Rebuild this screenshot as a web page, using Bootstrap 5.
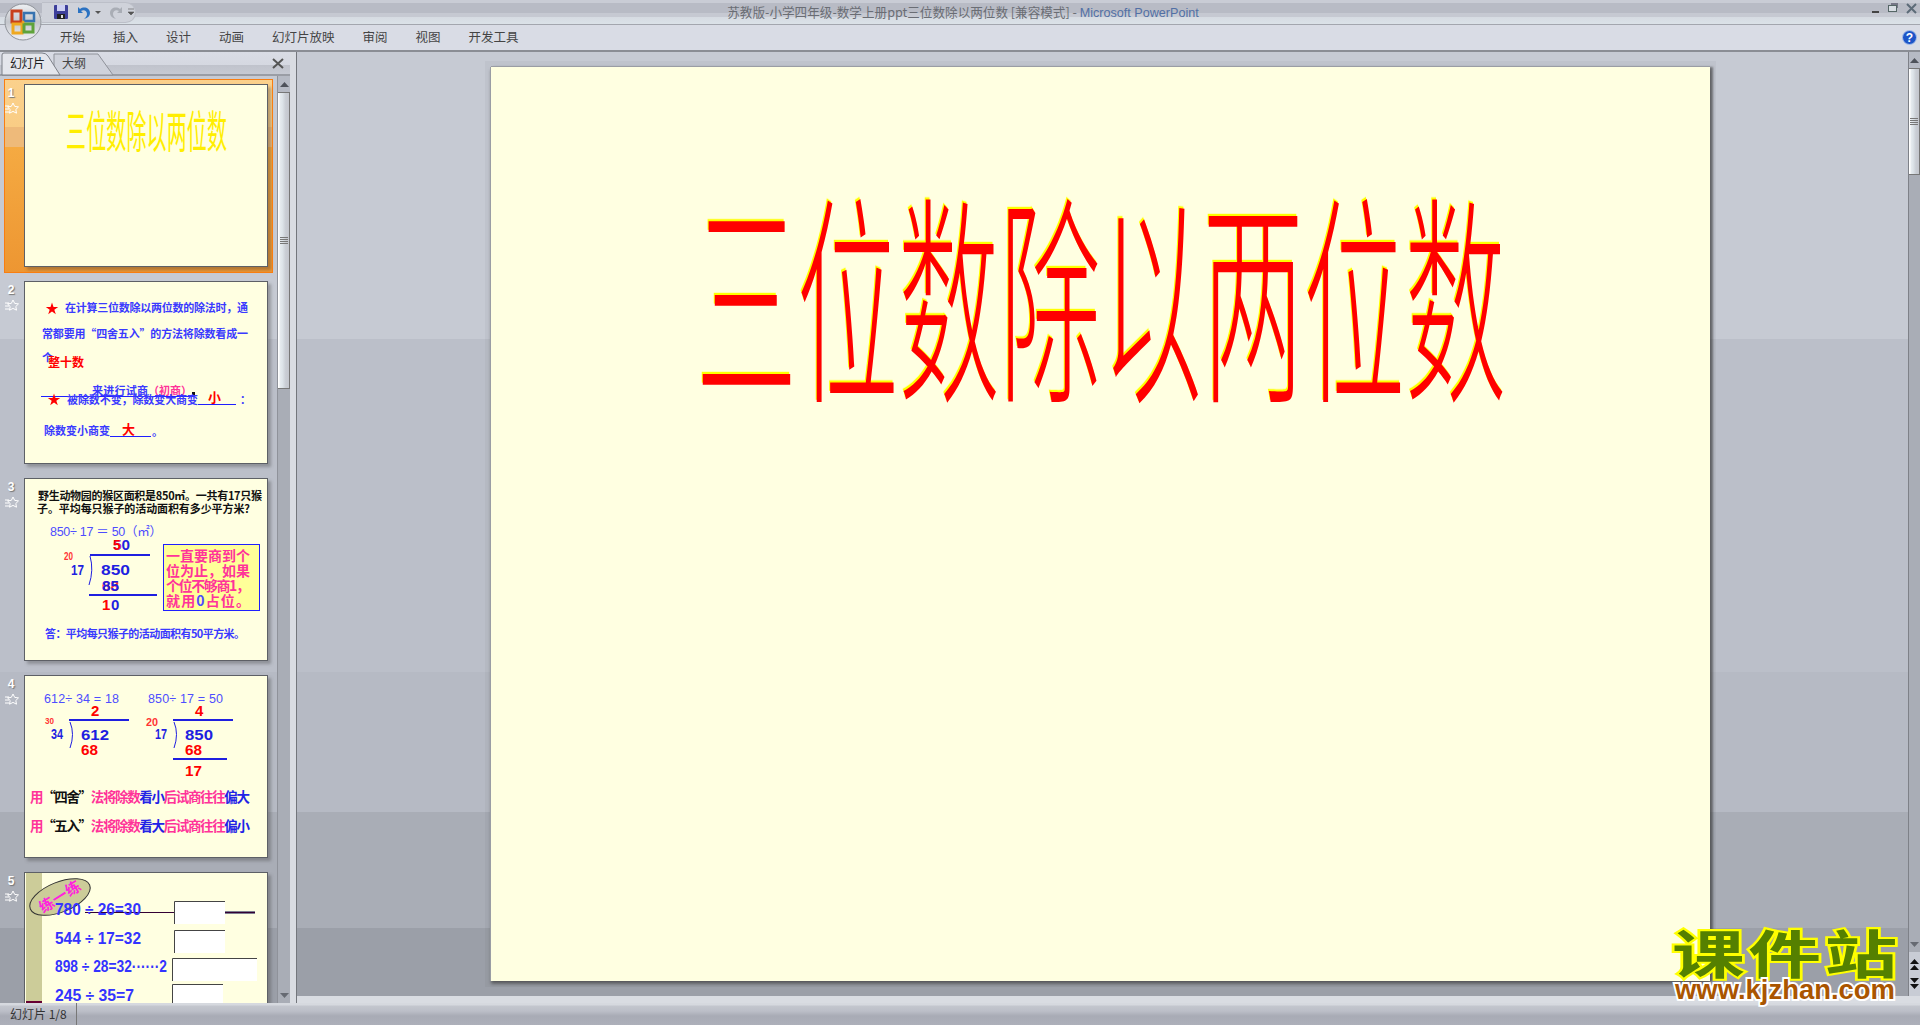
<!DOCTYPE html>
<html lang="zh-CN">
<head>
<meta charset="utf-8">
<title>Microsoft PowerPoint</title>
<link href="https://cdn.jsdelivr.net/npm/bootstrap@5.3.0/dist/css/bootstrap.min.css" rel="stylesheet">
<style>
html,body{height:100%;margin:0;overflow:hidden}
body{font-family:"Liberation Sans","Noto Sans CJK SC",sans-serif;font-size:12px;color:#333;background:#c6cad3;width:1920px;height:1025px}
svg{display:block}
svg text{font-family:"Liberation Sans","Noto Sans CJK SC",sans-serif;font-weight:700}
svg text.cj{font-family:"Noto Sans CJK SC",sans-serif}
svg text.lt{font-weight:400}
svg text.hair{font-weight:300}
.app-frame{height:1025px;position:relative}
.title-row{height:24px;display:grid;grid-template-columns:1fr auto 1fr;align-items:start;background:linear-gradient(#c9ccd5 0,#c9ccd5 3px,#b8bbc5 3px,#b8bbc5 13px,#c6c9d2 13px,#c6c9d2 17px,#d6dbe2 17px,#dbe2e8 24px)}
.qat-pill{margin-left:42px;margin-top:2px;height:21px;width:94px;background:#cfd2da;border:1px solid #bcbfc8;border-left:0;border-radius:0 11px 11px 0;display:flex;align-items:center}
.doc-title{font-family:"Noto Sans CJK SC","Liberation Sans",sans-serif;color:#6a6d74;font-size:12.6px;line-height:24px;padding-left:6px;white-space:nowrap}
.doc-title em{font-style:normal;color:#5270a5;font-family:"Liberation Sans",sans-serif}
.win-btns{justify-self:end;padding-top:3px;padding-right:2px}
.ribbon-row{height:28px;border-top:1px solid #a3a6ae;border-bottom:2px solid #8a8d94;background:#d9dce5;display:flex;align-items:center;padding-left:60px;padding-right:3px}
.ribbon-row .nav{gap:28px;font-size:12.5px;font-family:"Noto Sans CJK SC",sans-serif;color:#444;line-height:1}
.ribbon-row .nav-link{padding:0;color:#444}
.office-orb{position:absolute;left:4px;top:3px}
.work-area{height:951px;display:flex;background:linear-gradient(#c6cad3 0,#c6cad3 287px,#bbbfc9 287px,#bbbfc9 620px,#b6bac4 620px,#b6bac4 760px,#a9adb6 760px,#a9adb6 876px,#9b9fa8 876px)}
.left-pane{width:290px;display:flex;flex-direction:column;flex:none}
.pane-head{height:24px;background:linear-gradient(#d9dce5 0,#d5d8e1 55%,#c0c3cc 55%,#c6c9d2 90%,#9a9da5 90%);display:flex;justify-content:space-between;flex:none}
.close-x{padding:6px 6px 0 0}
.pane-body{flex:1;display:flex;min-height:0}
.thumb-list{flex:1;padding:3px 0 0 4px;overflow:hidden;display:flex;flex-direction:column;gap:3px}
.thumb-row{width:269px;height:194px;flex:none;display:flex;padding:5px 0 0 0}
.thumb-row.is-on{outline:1px solid #f97e10;outline-offset:-1px;background:linear-gradient(#fbd18c 0,#f9cd85 48px,#eeba7a 48px,#eeba7a 68px,#f5aa42 68px,#ed9632 100%)}
.num-col{width:20px;flex:none;padding-left:1px;color:#fff;font-weight:700;font-size:12px;line-height:18px;text-shadow:1px 1px 1px #777}
.num-col div{width:12px;text-align:center}
.slide-mini{width:244px;height:183px;background:#ffffe1;outline:1px solid #5d6066;outline-offset:-1px;box-shadow:3px 3px 3px rgba(60,60,60,.35);flex:none;overflow:hidden}
.bar-y{width:13px;flex:none;background:#a9adb6;display:flex;flex-direction:column;border-left:1px solid #8f929a}
.bar-btn{height:16px;flex:none;display:flex;align-items:center;justify-content:center;background:#b6bac4}
.bar-btn.flat{background:transparent}
.bar-thumb{background:linear-gradient(90deg,#fff 0,#fff 1px,#e6ebef 2px,#dde4e9 40%,#c9cdd4 70%,#c4c7ce 100%);border:1px solid #777;border-left:0;display:flex;align-items:center;justify-content:center;flex:none}
.thumb-a{height:297px}
.gap-fill{flex:1}
.split-bar{width:7px;flex:none;background:#d9dce2;border-right:1px solid #73767c}
.right-side{flex:1;display:flex;flex-direction:column;min-width:0}
.edit-row{flex:1;display:flex;min-height:0}
.edit-main{flex:1;padding:15px 0 0 194px}
.slide-big{width:1219px;height:914px;background:#ffffe1;box-shadow:0 -1px 0 #9a9da4,-1px 0 0 #9a9da4,3px 0 2px rgba(60,60,60,.6),0 3px 3px rgba(60,60,60,.6),0 0 0 6px rgba(0,0,0,.03)}
.bar-main{width:12px;border-left:1px solid #7e8188}
.bar-main .thumb-c{height:107px}
.nav-btns{height:44px;flex:none;background:#c8ccd5;display:flex;flex-direction:column;align-items:center;justify-content:center;gap:6px}
.low-strip{height:7px;background:#d9dce2;flex:none}
.status-row{height:22px;display:flex;align-items:center;background:linear-gradient(#d6d9df 0,#d6d9df 2px,#c3c6ce 3px,#bcbfc8 8px,#a8abb5 13px,#adb0ba 22px);font-family:"Noto Sans CJK SC",sans-serif;font-size:12px;color:#333;padding-left:10px}
.status-cell{width:67px;height:22px;line-height:21px;border-right:1px solid #777}
.brand-mark{position:absolute;left:1660px;top:905px}
.big-title{filter:drop-shadow(-1px -1px 0 #ff0)}
</style>
</head>
<body>
<svg width="0" height="0" class="position-absolute">
<defs>
<polygon id="st5" points="0,-6.500 1.500,-2 6.200,-2 2.300,.8 3.800,5.300 0,2.500 -3.800,5.300 -2.300,.8 -6.200,-2 -1.500,-2" fill="#f00"/>
<g id="trans-star">
<path d="M8 1l1.700 3.400 3.800.5-2.700 2.600.7 3.700L8 9.400 4.500 11.200l.7-3.700L2.500 4.900l3.800-.5z" fill="none" stroke="#fff" stroke-width="1"/>
<path d="M0 4h4M0 7h4M0 10h4" stroke="#fff" stroke-width="1"/>
</g>
<g id="grip"><path d="M0 .5h8M0 2.500h8M0 4.500h8M0 6.500h8" stroke="#777" stroke-width="1"/></g>
</defs>
</svg>
<div class="app-frame d-flex flex-column">
  <div class="title-row">
    <div>
      <div class="qat-pill">
        <svg width="92" height="19" viewBox="0 0 92 19">
          <rect x="12" y="2" width="14" height="14" rx="1" fill="#3d3f9a"/>
          <rect x="15" y="2" width="8" height="6" fill="#cdd0f2"/>
          <rect x="15" y="11" width="8" height="5" fill="#222"/>
          <rect x="19" y="12" width="2" height="3" fill="#ddd"/>
          <path d="M36 4v6h5l-2-2c3-2 6 0 6 3 0 2-1 3-3 5 4-1 6-3 6-6 0-5-6-7-10-4l-2-2z" fill="#2b72c2"/>
          <path d="M53 8h6l-3 3z" fill="#555"/>
          <path d="M80 4v6h-5l2-2c-3-2-6 0-6 3 0 2 1 3 3 5-4-1-6-3-6-6 0-5 6-7 10-4l2-2z" fill="#a9adb5"/>
          <path d="M88 6h6M88 9h6l-3 3z" fill="#555" stroke="#555" stroke-width=".6" transform="translate(-2,0)"/>
        </svg>
      </div>
    </div>
    <div class="doc-title">苏教版-小学四年级-数学上册ppt三位数除以两位数 [兼容模式] - <em>Microsoft PowerPoint</em></div>
    <div class="win-btns">
      <svg width="46" height="12" viewBox="0 0 46 12">
        <rect x="0" y="8" width="7" height="2" fill="#444"/>
        <rect x="19" y="0" width="7" height="5" fill="#667" opacity=".8"/>
        <rect x="16.500" y="2.500" width="8" height="6" fill="#d8dde3" stroke="#566"/>
        <path d="M35 1l9 9M44 1l-9 9" stroke="#5c6b78" stroke-width="2"/>
      </svg>
    </div>
  </div>
  <div class="ribbon-row">
    <ul class="nav flex-nowrap">
      <li class="nav-item"><a class="nav-link" href="#">开始</a></li>
      <li class="nav-item"><a class="nav-link" href="#">插入</a></li>
      <li class="nav-item"><a class="nav-link" href="#">设计</a></li>
      <li class="nav-item"><a class="nav-link" href="#">动画</a></li>
      <li class="nav-item"><a class="nav-link" href="#">幻灯片放映</a></li>
      <li class="nav-item"><a class="nav-link" href="#">审阅</a></li>
      <li class="nav-item"><a class="nav-link" href="#">视图</a></li>
      <li class="nav-item"><a class="nav-link" href="#">开发工具</a></li>
    </ul>
    <svg class="ms-auto" width="15" height="15" viewBox="0 0 15 15">
      <circle cx="7.500" cy="7.500" r="7" fill="#1d55c8" stroke="#a8c0ea"/>
      <text x="7.500" y="12" font-size="12" text-anchor="middle" fill="#fff">?</text>
    </svg>
  </div>
  <svg class="office-orb" width="38" height="38" viewBox="0 0 38 38">
    <defs>
      <linearGradient id="orbg" x1="0" y1="0" x2="0" y2="1"><stop offset="0" stop-color="#eef0f3"/><stop offset=".5" stop-color="#c3c6cc"/><stop offset="1" stop-color="#f0f1f4"/></linearGradient>
    </defs>
    <circle cx="19" cy="19" r="18" fill="url(#orbg)" stroke="#8f939a"/>
    <rect x="8" y="8" width="9" height="11" fill="none" stroke="#c8401c" stroke-width="3"/>
    <rect x="20" y="10" width="10" height="8" fill="none" stroke="#3773b0" stroke-width="2.500"/>
    <rect x="9" y="21" width="9" height="9" fill="none" stroke="#efa81f" stroke-width="3"/>
    <rect x="20" y="21" width="9" height="8" fill="none" stroke="#5fa33a" stroke-width="3"/>
    <circle cx="19" cy="19" r="1.500" fill="#e8a020"/>
  </svg>

  <div class="work-area">
    <div class="left-pane">
      <div class="pane-head">
        <svg width="120" height="24" viewBox="0 0 120 24">
          <path d="M54 23V2h44l15 21z" fill="#cfd2db" stroke="#8f929a"/>
          <path d="M2 23V3q0-2 2-2h38q4 0 6 3l12 19z" fill="#e4e6ec" stroke="#7d8088"/>
          <text class="cj lt" x="10" y="16" font-size="12" fill="#222" textLength="35">幻灯片</text>
          <text class="cj lt" x="62" y="16" font-size="12" fill="#444" textLength="24">大纲</text>
        </svg>
        <div class="close-x">
          <svg width="12" height="11" viewBox="0 0 12 11"><path d="M1 1l10 9M11 1L1 10" stroke="#555" stroke-width="2"/></svg>
        </div>
      </div>
      <div class="pane-body">
        <div class="thumb-list">

          <div class="thumb-row is-on">
            <div class="num-col"><div>1</div><svg width="16" height="12"><use href="#trans-star"/></svg></div>
            <div class="slide-mini">
              <svg width="244" height="183" viewBox="0 0 244 183">
                <text class="cj lt" transform="translate(42,64) scale(1,2.2)" font-size="20" fill="#ffee00" textLength="161">三位数除以两位数</text>
              </svg>
            </div>
          </div>

          <div class="thumb-row">
            <div class="num-col"><div>2</div><svg width="16" height="12"><use href="#trans-star"/></svg></div>
            <div class="slide-mini">
              <svg width="244" height="183" viewBox="24 281 244 183">
                <g fill="#3a3aff" font-size="11">
                  <use href="#st5" x="52" y="309"/>
                  <text class="cj" x="65" y="312" textLength="183">在计算三位数除以两位数的除法时，通</text>
                  <text class="cj" x="42" y="338" textLength="206">常都要用“四舍五入”的方法将除数看成一</text>
                  <text class="cj" x="42" y="362">个</text>
                  <text class="cj" x="48" y="367" font-size="12" fill="#f00" textLength="36">整十数</text>
                  <text class="cj" x="92" y="395" textLength="56">来进行试商</text>
                  <text class="cj" x="148" y="395" fill="#ff3399" textLength="44">（初商）</text>
                  <rect x="41" y="396" width="154" height="1" fill="#1f1fff"/>
                  <rect x="192" y="392" width="3" height="3" fill="#111"/>
                  <use href="#st5" x="54" y="400"/>
                  <text class="cj" x="67" y="404" textLength="131">被除数不变，除数变大商变</text>
                  <rect x="198" y="404" width="38" height="1" fill="#1f1fff"/>
                  <text class="cj" x="208" y="402" font-size="13" fill="#f00">小</text>
                  <text class="cj" x="240" y="404">：</text>
                  <text class="cj" x="44" y="435" textLength="66">除数变小商变</text>
                  <rect x="110" y="436" width="41" height="1" fill="#1f1fff"/>
                  <text class="cj" x="122" y="434" font-size="13" fill="#f00">大</text>
                  <text class="cj" x="152" y="436">。</text>
                </g>
              </svg>
            </div>
          </div>

          <div class="thumb-row">
            <div class="num-col"><div>3</div><svg width="16" height="12"><use href="#trans-star"/></svg></div>
            <div class="slide-mini">
              <svg width="244" height="183" viewBox="24 478 244 183">
                <g fill="#3a3aff" font-size="11">
                  <text class="cj" x="38" y="500" fill="#111" textLength="224">野生动物园的猴区面积是850㎡。一共有17只猴</text>
                  <text class="cj" x="37" y="513" fill="#111" textLength="213">子。平均每只猴子的活动面积有多少平方米?</text>
                  <text class="lt" x="50" y="536" font-size="12.500" fill="#4d4dff" textLength="112">850÷ 17 ＝ 50（㎡）</text>
                  <text x="113" y="550" font-size="14" fill="#1f1fe0" textLength="17" lengthAdjust="spacingAndGlyphs">50</text>
                  <text x="113" y="550" font-size="14" fill="#f00">5</text>
                  <rect x="90" y="554" width="60" height="2" fill="#1f1fe0"/>
                  <text x="64" y="560" font-size="10" fill="#f33" textLength="9" lengthAdjust="spacingAndGlyphs">20</text>
                  <text x="71" y="575" font-size="14" fill="#1f1fe0" textLength="13" lengthAdjust="spacingAndGlyphs">17</text>
                  <path d="M90 556q4 14-1 29" fill="none" stroke="#1f1fe0"/>
                  <text x="101" y="575" font-size="15" fill="#1f1fe0" textLength="29" lengthAdjust="spacingAndGlyphs">850</text>
                  <text x="102" y="591" font-size="15" fill="#f33" textLength="17" lengthAdjust="spacingAndGlyphs">68</text>
                  <text x="102" y="591" font-size="15" fill="#1f1fe0" textLength="17" lengthAdjust="spacingAndGlyphs">85</text>
                  <rect x="89" y="594" width="68" height="2" fill="#1f1fe0"/>
                  <text x="102" y="610" font-size="15" fill="#f00">1</text>
                  <text x="111" y="610" font-size="15" fill="#1f1fe0">0</text>
                  <rect x="163.500" y="544.500" width="96" height="66" fill="#ffff99" stroke="#1f1fff"/>
                  <g fill="#ff3399" font-size="14">
                    <text class="cj" x="166" y="561" textLength="84">一直要商到个</text>
                    <text class="cj" x="166" y="576" textLength="84">位为止，如果</text>
                    <text class="cj" x="166" y="591" textLength="84">个位不够商1，</text>
                    <text class="cj" x="166" y="606" textLength="84">就用<tspan fill="#4d4dff">0</tspan>占位。</text>
                  </g>
                  <text class="cj" x="45" y="638" textLength="200">答：平均每只猴子的活动面积有50平方米。</text>
                </g>
              </svg>
            </div>
          </div>

          <div class="thumb-row">
            <div class="num-col"><div>4</div><svg width="16" height="12"><use href="#trans-star"/></svg></div>
            <div class="slide-mini">
              <svg width="244" height="183" viewBox="24 675 244 183">
                <g fill="#1f1fe0" font-size="15">
                  <text class="lt" x="44" y="703" font-size="12.500" fill="#4d4dff" textLength="75">612÷ 34 = 18</text>
                  <text class="lt" x="148" y="703" font-size="12.500" fill="#4d4dff" textLength="75">850÷ 17 = 50</text>
                  <text x="91" y="716" fill="#f00">2</text>
                  <text x="195" y="716" fill="#f00">4</text>
                  <text x="45" y="724" font-size="9" fill="#f33" textLength="9" lengthAdjust="spacingAndGlyphs">30</text>
                  <text x="146" y="726" font-size="10" fill="#f33" textLength="12" lengthAdjust="spacingAndGlyphs">20</text>
                  <rect x="69" y="719" width="60" height="2"/>
                  <rect x="173" y="719" width="60" height="2"/>
                  <text x="51" y="739" font-size="14" textLength="12" lengthAdjust="spacingAndGlyphs">34</text>
                  <text x="155" y="739" font-size="14" textLength="12" lengthAdjust="spacingAndGlyphs">17</text>
                  <path d="M70 722q5 12 0 26M174 722q5 12 0 26" fill="none" stroke="#1f1fe0"/>
                  <text x="81" y="740" textLength="28" lengthAdjust="spacingAndGlyphs">612</text>
                  <text x="185" y="740" textLength="28" lengthAdjust="spacingAndGlyphs">850</text>
                  <text x="81" y="755" fill="#f00" textLength="17" lengthAdjust="spacingAndGlyphs">68</text>
                  <text x="185" y="755" fill="#f00" textLength="17" lengthAdjust="spacingAndGlyphs">68</text>
                  <rect x="173" y="758" width="54" height="2"/>
                  <text x="185" y="776" fill="#f00" textLength="17" lengthAdjust="spacingAndGlyphs">17</text>
                  <text class="cj" x="30" y="802" font-size="13.500" fill="#ff3399" textLength="220">用<tspan fill="#111">“四舍”</tspan>法将除数<tspan fill="#2222e6">看小</tspan>后试商往往<tspan fill="#2222e6">偏大</tspan></text>
                  <text class="cj" x="30" y="831" font-size="13.500" fill="#ff3399" textLength="220">用<tspan fill="#111">“五入”</tspan>法将除数<tspan fill="#2222e6">看大</tspan>后试商往往<tspan fill="#2222e6">偏小</tspan></text>
                </g>
              </svg>
            </div>
          </div>

          <div class="thumb-row">
            <div class="num-col"><div>5</div><svg width="16" height="12"><use href="#trans-star"/></svg></div>
            <div class="slide-mini">
              <svg width="244" height="183" viewBox="24 873 244 183">
                <rect x="26" y="874" width="16" height="128" fill="#cccc99"/>
                <rect x="26" y="1002" width="16" height="8" fill="#660033"/>
                <ellipse cx="60" cy="898" rx="32" ry="15" transform="rotate(-22 60 898)" fill="#cccc99" stroke="#333"/>
                <text class="cj" x="37" y="903" transform="rotate(-32 60 898)" font-size="15" fill="#ff22dd" textLength="46">练一练</text>
                <rect x="85" y="913" width="90" height="1" fill="#330033"/>
                <rect x="225" y="912" width="30" height="3" fill="#7e7e90"/>
                <rect x="225" y="913" width="30" height="1" fill="#330033"/>
                <g fill="#fff">
                  <rect x="174" y="902" width="51" height="23"/>
                  <rect x="174" y="931" width="51" height="23"/>
                  <rect x="172" y="959" width="85" height="23"/>
                  <rect x="172" y="985" width="51" height="23"/>
                </g>
                <path d="M174.500 925V902.500H225M174.500 954V931.500H225M172.500 982V959.500H257M172.500 1008V985.500H223" fill="none" stroke="#444"/>
                <g fill="#3333ff" font-size="17">
                  <text x="55" y="916" textLength="86" lengthAdjust="spacingAndGlyphs">780 ÷ 26=30</text>
                  <text x="55" y="945" textLength="86" lengthAdjust="spacingAndGlyphs">544 ÷ 17=32</text>
                  <text x="55" y="973" textLength="112" lengthAdjust="spacingAndGlyphs">898 ÷ 28=32······2</text>
                  <text x="55" y="1002" textLength="79" lengthAdjust="spacingAndGlyphs">245 ÷ 35=7</text>
                </g>
              </svg>
            </div>
          </div>

        </div>
        <div class="bar-y">
          <div class="bar-btn"><svg width="9" height="5"><path d="M4.500 0L9 5H0z" fill="#4e525a"/></svg></div>
          <div class="bar-thumb thumb-a"><svg width="8" height="7"><use href="#grip"/></svg></div>
          <div class="gap-fill"></div>
          <div class="bar-btn flat"><svg width="9" height="5"><path d="M0 0h9L4.500 5z" fill="#666a72"/></svg></div>
        </div>
      </div>
    </div>
    <div class="split-bar"></div>
    <div class="right-side">
      <div class="edit-row">
        <div class="edit-main">
          <div class="slide-big">
            <svg width="1219" height="914" viewBox="0 0 1219 914">
              <text class="cj hair big-title" transform="translate(205,318) scale(1,2.2)" font-size="101" fill="#f00" textLength="810">三位数除以两位数</text>
            </svg>
          </div>
        </div>
        <div class="bar-y bar-main">
          <div class="bar-btn"><svg width="9" height="5"><path d="M4.500 0L9 5H0z" fill="#4e525a"/></svg></div>
          <div class="bar-thumb thumb-c"><svg width="8" height="7"><use href="#grip"/></svg></div>
          <div class="gap-fill"></div>
          <div class="bar-btn flat"><svg width="9" height="5"><path d="M0 0h9L4.500 5z" fill="#666a72"/></svg></div>
          <div class="nav-btns">
            <svg width="9" height="12"><path d="M4.500 0L9 5H0zM4.500 6L9 11H0z" fill="#111"/></svg>
            <svg width="9" height="12"><path d="M0 1h9L4.500 6zM0 7h9L4.500 12z" fill="#111"/></svg>
          </div>
        </div>
      </div>
      <div class="low-strip"></div>
    </div>
  </div>

  <div class="status-row"><div class="status-cell">幻灯片 1/8</div></div>

  <svg class="brand-mark" width="250" height="115" viewBox="0 0 250 115">
    <text class="cj" transform="translate(12,69) scale(1.4,1)" font-size="52" fill="#558000" stroke="#ffff00" stroke-width="4" paint-order="stroke" font-weight="900" textLength="161">课件站</text>
    <text x="15" y="94" font-size="28" fill="#aa5500" stroke="#fff" stroke-width="4" paint-order="stroke" textLength="220" lengthAdjust="spacingAndGlyphs">www.kjzhan.com</text>
  </svg>
</div>
<script src="https://cdn.jsdelivr.net/npm/bootstrap@5.3.0/dist/js/bootstrap.bundle.min.js"></script>
</body>
</html>
